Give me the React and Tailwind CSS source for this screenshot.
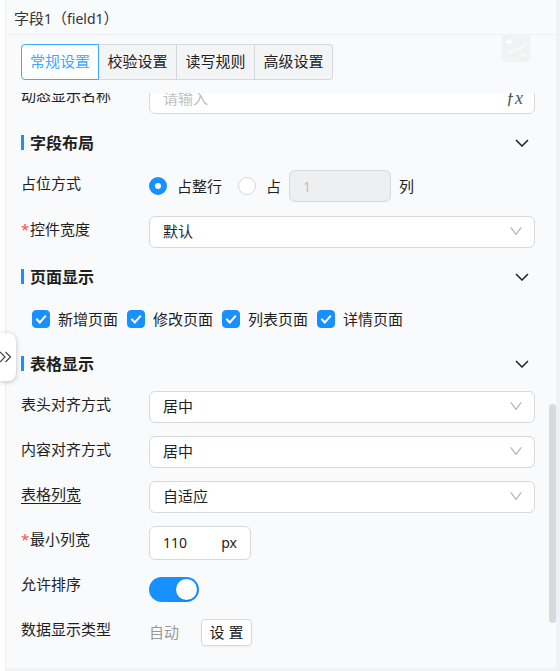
import { useState } from 'react';

const TABS = ['常规设置', '校验设置', '读写规则', '高级设置'];
const PAGES = ['新增页面', '修改页面', '列表页面', '详情页面'];

function SectionArrow() {
  return (
    <svg className="w-[14px] h-2 stroke-[1.5]" viewBox="0 0 14 8" fill="none" stroke="currentColor" aria-hidden="true">
      <path d="M1 1l6 6 6-6" />
    </svg>
  );
}

function SelectArrow() {
  return (
    <svg
      className="absolute right-[13px] top-[11px] w-3 h-2 text-[#b4b4b4] pointer-events-none"
      viewBox="0 0 12 8"
      fill="none"
      stroke="currentColor"
      strokeWidth="1.2"
      aria-hidden="true"
    >
      <path d="M0.7 0.4l5.300 7 5.300-7" />
    </svg>
  );
}

function Section({ title, gap, children }) {
  const [open, setOpen] = useState(true);

  return (
    <section>
      <div className="h-14 flex items-center justify-between pt-px pr-[6px]">
        <h2 className="flex items-center gap-[6px] text-base leading-6 font-bold">
          <span className="w-[3px] h-[15px] bg-[#1890ff]" />
          {title}
        </h2>
        <button type="button" aria-label={title} aria-expanded={open} onClick={() => setOpen(!open)}>
          <SectionArrow />
        </button>
      </div>
      {open && <div className={`flex flex-col ${gap}`}>{children}</div>}
    </section>
  );
}

function Row({ label, htmlFor, required, underline, children }) {
  return (
    <div className="flex items-start h-8">
      <label htmlFor={htmlFor} className="w-32 shrink-0 leading-[26px] whitespace-nowrap">
        {required && <span className="inline-block w-[9px] text-[#ff4d4f]">*</span>}
        <span
          className={
            underline ? 'underline decoration-1 underline-offset-[3px] [text-decoration-skip-ink:none]' : ''
          }
        >
          {label}
        </span>
      </label>
      {children}
    </div>
  );
}

function SelectField({ id, options }) {
  return (
    <div className="relative flex-1">
      <select
        id={id}
        className="block w-full h-8 pl-[13px] pr-9 pb-[2px] appearance-none rounded-md border border-[#d9d9d9] bg-white outline-none"
      >
        {options.map((option) => (
          <option key={option}>{option}</option>
        ))}
      </select>
      <SelectArrow />
    </div>
  );
}

function CheckItem({ label }) {
  return (
    <label className="flex items-center gap-2 whitespace-nowrap">
      <span className="relative size-[18px]">
        <input
          type="checkbox"
          defaultChecked
          className="peer block size-[18px] appearance-none rounded border border-[#d9d9d9] bg-white checked:border-[#1890ff] checked:bg-[#1890ff]"
        />
        <svg
          className="absolute inset-0 size-[18px] hidden peer-checked:block pointer-events-none"
          viewBox="0 0 18 18"
          fill="none"
          stroke="white"
          strokeWidth="2"
        >
          <path d="M4.3 8.8l3.5 3.7 6-6.8" />
        </svg>
      </span>
      {label}
    </label>
  );
}

const RADIO =
  'size-[18px] shrink-0 appearance-none rounded-full border border-[#d9d9d9] bg-white checked:border-[6px] checked:border-[#1890ff]';

function App() {
  const [tab, setTab] = useState(TABS[0]);
  const [span, setSpan] = useState('row');
  const [sortable, setSortable] = useState(true);

  return (
    <div className="relative min-h-screen pl-[5px] pr-1 pb-[3px] bg-[linear-gradient(to_right,#fff_5px,#f0f2f6_5px)] text-[15px] text-[#1f1f1f] font-['Noto_Sans','Noto_Sans_CJK_SC',sans-serif]">
      <div className="relative border-l border-[#eceef1] bg-[#f9fafc]">
        {/* Title */}
        <header className="h-[35px] ml-px pl-[7px] pt-[2px] flex items-center border-b border-[#eeeff2] text-[#333]">
          <h1>
            字段<span className="text-sm">1</span>（<span className="text-sm">field1</span>）
          </h1>
        </header>

        {/* Assistant shortcut */}
        <button
          type="button"
          aria-label="AI"
          className="absolute top-[34px] right-[26px] size-7 rounded bg-[#f1f2f3]"
        >
          <svg viewBox="0 0 28 28" className="size-7" fill="none">
            <path
              d="M5 21.500C7.500 15 12 15 16 14C20.500 13 23 10 24.500 6C24 13 20.500 16 16 16.500C11 17 8 17.500 5 21.500Z"
              fill="#f4fcf7"
              stroke="#f4fcf7"
              strokeWidth="0.5"
            />
            <path d="M7 3.500l1.400 3.100L11.500 8l-3.100 1.400L7 12.500 5.600 9.400 2.500 8l3.100-1.400z" fill="#fcfdfe" />
            <path d="M21 16.500l1.400 3.100 3.100 1.400-3.100 1.400L21 25.500l-1.400-3.100-3.100-1.400 3.100-1.400z" fill="#f1fcf5" />
          </svg>
        </button>

        {/* Tabs */}
        <div className="flex pl-[15px] pt-[9px] pb-[13px]" role="tablist">
          {TABS.map((name) => (
            <button
              key={name}
              type="button"
              role="tab"
              aria-selected={tab === name}
              onClick={() => setTab(name)}
              className={`w-[78px] h-9 pb-[2px] border-y border-r whitespace-nowrap first:border-l first:rounded-l last:rounded-r ${
                tab === name ? 'border-[#40a9ff] bg-white text-[#40a9ff]' : 'border-[#d5d7da] bg-[#f3f4f6]'
              }`}
            >
              {name}
            </button>
          ))}
        </div>

        {/* Settings form */}
        <form className="overflow-hidden pl-[15px] pr-[21px] pb-5" onSubmit={(e) => e.preventDefault()}>
          <div className="-mt-[11px]">
            <Row label="动态显示名称" htmlFor="display-name">
              <div className="relative flex-1">
                <input
                  id="display-name"
                  placeholder="请输入"
                  className="block w-full h-8 pl-[13px] pr-9 rounded-md border border-[#d9d9d9] bg-white outline-none placeholder:text-[#bfbfbf]"
                />
                <span className="absolute right-3 top-1 leading-6 text-lg italic text-[#555] font-['Liberation_Serif',serif]">
                  ƒx
                </span>
              </div>
            </Row>
          </div>

          <Section title="字段布局" gap="gap-[14px]">
            <Row label="占位方式">
              <div className="flex items-center h-8">
                <label className="flex items-center gap-[10px] mr-4">
                  <input
                    type="radio"
                    name="span"
                    className={RADIO}
                    checked={span === 'row'}
                    onChange={() => setSpan('row')}
                  />
                  占整行
                </label>
                <label className="flex items-center gap-[10px] mr-2">
                  <input
                    type="radio"
                    name="span"
                    className={RADIO}
                    checked={span === 'cols'}
                    onChange={() => setSpan('cols')}
                  />
                  占
                </label>
                <label className="flex items-center gap-2">
                  <input
                    defaultValue="1"
                    disabled={span === 'row'}
                    className="w-[102px] h-8 px-[13px] rounded-md border border-[#d9d9d9] bg-white text-sm disabled:bg-[#eeeff1] disabled:text-[#bfbfbf]"
                  />
                  列
                </label>
              </div>
            </Row>
            <Row label="控件宽度" htmlFor="control-width" required>
              <SelectField id="control-width" options={['默认']} />
            </Row>
          </Section>

          <Section title="页面显示" gap="">
            <div className="flex items-center gap-[9px] h-[31px] pb-px pl-[11px]">
              {PAGES.map((page) => (
                <CheckItem key={page} label={page} />
              ))}
            </div>
          </Section>

          <Section title="表格显示" gap="gap-[13px]">
            <Row label="表头对齐方式" htmlFor="head-align">
              <SelectField id="head-align" options={['居中']} />
            </Row>
            <Row label="内容对齐方式" htmlFor="body-align">
              <SelectField id="body-align" options={['居中']} />
            </Row>
            <Row label="表格列宽" htmlFor="column-width" underline>
              <SelectField id="column-width" options={['自适应']} />
            </Row>
            <Row label="最小列宽" htmlFor="min-width" required>
              <div className="flex items-center w-[102px] h-[34px] px-[13px] rounded-md border border-[#d9d9d9] bg-white text-sm">
                <input id="min-width" defaultValue="110" className="flex-1 min-w-0 bg-transparent outline-none" />
                <span>px</span>
              </div>
            </Row>
            <Row label="允许排序" htmlFor="sortable">
              <div className="flex items-center h-9">
                <button
                  id="sortable"
                  type="button"
                  role="switch"
                  aria-checked={sortable}
                  onClick={() => setSortable(!sortable)}
                  className={`flex w-[50px] h-[25px] p-[2px] rounded-full ${
                    sortable ? 'justify-end bg-[#1890ff]' : 'justify-start bg-[#bfbfbf]'
                  }`}
                >
                  <span className="size-[21px] rounded-full bg-white shadow-sm" />
                </button>
              </div>
            </Row>
            <Row label="数据显示类型" htmlFor="display-type">
              <div className="flex items-center h-8 gap-[22px]">
                <span className="text-[#999]">自动</span>
                <button
                  id="display-type"
                  type="button"
                  className="w-[51px] h-[27px] rounded border border-[#d9d9d9] bg-white leading-none shadow-xs"
                >
                  设 置
                </button>
              </div>
            </Row>
          </Section>
        </form>

        {/* Scrollbar thumb */}
        <div className="absolute right-0 bottom-[45px] w-[7px] h-[219px] rounded-full bg-[#d6d9e0]" />
      </div>

      {/* Collapse handle */}
      <button
        type="button"
        aria-label="收起"
        className="absolute left-0 top-1/2 -translate-y-[3px] w-4 h-12 flex items-center rounded-r-lg bg-white shadow-[0_1px_5px_rgba(0,0,0,0.25)]"
      >
        <svg className="w-3 h-3" viewBox="0 0 12 12" fill="none" stroke="#444" strokeWidth="1.2">
          <path d="M0 1l5 5-5 5M5.500 1l5 5-5 5" />
        </svg>
      </button>
    </div>
  );
}

export default App;
